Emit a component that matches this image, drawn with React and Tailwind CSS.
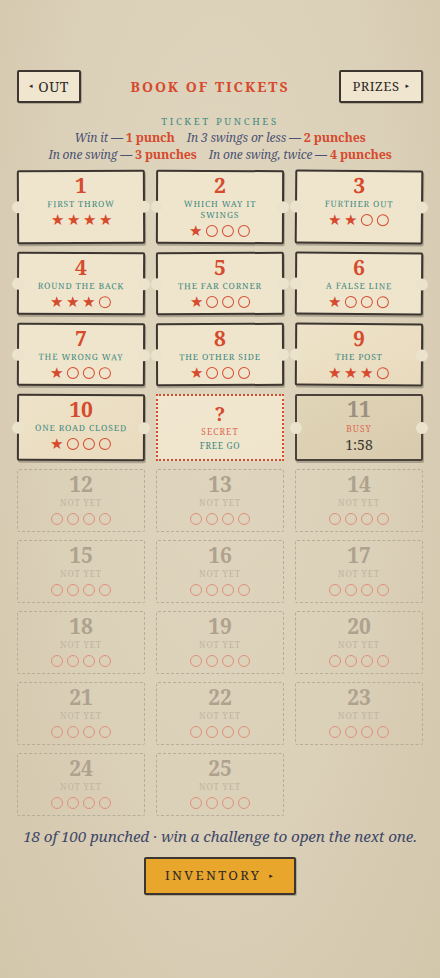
import React from 'react';

const SERIF = { fontFamily: '"Noto Serif", "DejaVu Serif", serif' };

const tickets = [
  { n: 1, title: 'First throw', p: 4, rot: '-rotate-[0.3deg]' },
  { n: 2, title: 'Which way it swings', p: 1, rot: 'rotate-[0.2deg]' },
  { n: 3, title: 'Further out', p: 2, rot: 'rotate-[0.5deg]' },
  { n: 4, title: 'Round the back', p: 3, rot: 'rotate-[0.3deg]' },
  { n: 5, title: 'The far corner', p: 1, rot: '-rotate-[0.2deg]' },
  { n: 6, title: 'A false line', p: 1, rot: 'rotate-[0.4deg]' },
  { n: 7, title: 'The wrong way', p: 1, rot: 'rotate-[0.3deg]' },
  { n: 8, title: 'The other side', p: 1, rot: '-rotate-[0.2deg]' },
  { n: 9, title: 'The post', p: 3, rot: 'rotate-[0.4deg]', warm: true },
  { n: 10, title: 'One road closed', p: 1, rot: 'rotate-[0.2deg]', warm: true },
];

function Punches({ count, faded }) {
  return (
    <div className="flex items-center justify-center gap-[3px] h-[15px]">
      {[0, 1, 2, 3].map((i) =>
        i < count ? (
          <span key={i} className="w-[13px] text-center text-[15px] leading-none text-[#d64a2e]">★</span>
        ) : (
          <span
            key={i}
            className={`w-[12px] h-[12px] rounded-full border-[1.5px] mx-[0.5px] ${faded ? 'border-[#e0907c]' : 'border-[#d64a2e]'}`}
          />
        )
      )}
    </div>
  );
}

function Notches() {
  return (
    <>
      <span className="absolute left-[-7px] top-1/2 -translate-y-1/2 w-[12px] h-[12px] rounded-full bg-[#ece3cc]" />
      <span className="absolute right-[-7px] top-1/2 -translate-y-1/2 w-[12px] h-[12px] rounded-full bg-[#ece3cc]" />
    </>
  );
}

function Ticket({ t }) {
  return (
    <div
      className={`relative flex flex-col items-center pt-[1px] pb-[4px] px-2 border-2 border-[#3d3630] rounded-[2px] shadow-[1px_2px_0_rgba(61,54,48,0.3)] ${t.rot} ${
        t.warm ? 'bg-gradient-to-br from-[#eee3c9] to-[#e8dabd]' : 'bg-[#efe5cd]'
      }`}
    >
      <Notches />
      <div className="text-[21px] leading-[25px] font-bold text-[#d64a2e]">{t.n}</div>
      <div className="text-[8.5px] leading-[11px] tracking-[0.1em] uppercase text-[#3f8a80] text-center mb-[3px]">
        {t.title}
      </div>
      <Punches count={t.p} />
    </div>
  );
}

function Secret() {
  return (
    <div className="relative flex flex-col items-center justify-center border-2 border-dotted border-[#d64a2e] bg-gradient-to-br from-[#f1e7d0] to-[#efe4cb]">
      <div className="text-[19px] leading-[22px] font-bold text-[#d64a2e]">?</div>
      <div className="text-[8.5px] leading-[13px] tracking-[0.12em] uppercase text-[#df6a52]">Secret</div>
      <div className="text-[8.5px] leading-[15px] tracking-[0.08em] uppercase text-[#3f8a80]">Free go</div>
    </div>
  );
}

function Busy() {
  return (
    <div className="relative flex flex-col items-center pt-[1px] pb-[4px] border-2 border-[#4a423a] rounded-[2px] shadow-[1px_2px_0_rgba(61,54,48,0.3)] bg-gradient-to-br from-[#e1d5b8] to-[#d8cbad]">
      <Notches />
      <div className="text-[21px] leading-[25px] font-bold text-[#9b9080]">11</div>
      <div className="text-[8.5px] leading-[13px] tracking-[0.12em] uppercase text-[#df6a52]">Busy</div>
      <div className="text-[14px] leading-[20px] text-[#3a342e]">1:58</div>
    </div>
  );
}

function Locked({ n }) {
  return (
    <div className="flex flex-col items-center pt-[2px] pb-[5px] border border-dashed border-[#b7ad99] rounded-[2px]">
      <div className="text-[21px] leading-[25px] font-bold text-[#aea28e]">{n}</div>
      <div className="text-[8.5px] leading-[11px] tracking-[0.1em] uppercase text-[#bfb5a2] mb-[3px]">Not yet</div>
      <Punches count={0} faded />
    </div>
  );
}

export default function App() {
  const locked = Array.from({ length: 14 }, (_, i) => i + 12);
  return (
    <div
      style={SERIF}
      className="min-h-[978px] w-full bg-[radial-gradient(ellipse_at_50%_35%,#e0d6bf_0%,#dbd0b8_55%,#d2c6ab_100%)] px-[17px] pt-[70px] pb-10"
    >
      {/* Header */}
      <div className="flex items-center justify-between">
        <button className="h-[33px] w-[64px] border-2 border-[#3d3630] rounded-[2px] bg-[#f0e6cf] text-[14px] tracking-[0.04em] text-[#2e2a26] flex items-center justify-center gap-[5px] shadow-[1px_1px_0_rgba(61,54,48,0.25)]">
          <span className="text-[7px]">◂</span>OUT
        </button>
        <h1 className="text-[14px] font-bold tracking-[0.14em] text-[#d64a2e]">BOOK OF TICKETS</h1>
        <button className="h-[33px] w-[84px] border-2 border-[#3d3630] rounded-[2px] bg-[#f0e6cf] text-[13px] tracking-[0.04em] text-[#2e2a26] flex items-center justify-center gap-[6px] shadow-[1px_1px_0_rgba(61,54,48,0.25)]">
          PRIZES<span className="text-[7px]">▸</span>
        </button>
      </div>

      {/* Punch rules */}
      <div className="mt-[12px] text-center tracking-[-0.01em]">
        <div className="text-[9.5px] tracking-[0.28em] text-[#3f8a80] leading-[14px]">TICKET PUNCHES</div>
        <div className="text-[12px] leading-[17px] text-[#4b5273]">
          <span className="italic">Win it —</span>{' '}
          <span className="font-bold text-[#d64a2e] text-[12.5px]">1 punch</span>
          <span className="inline-block w-[12px]" />
          <span className="italic">In 3 swings or less —</span>{' '}
          <span className="font-bold text-[#d64a2e] text-[12.5px]">2 punches</span>
        </div>
        <div className="text-[12px] leading-[17px] text-[#4b5273]">
          <span className="italic">In one swing —</span>{' '}
          <span className="font-bold text-[#d64a2e] text-[12.5px]">3 punches</span>
          <span className="inline-block w-[12px]" />
          <span className="italic">In one swing, twice —</span>{' '}
          <span className="font-bold text-[#d64a2e] text-[12.5px]">4 punches</span>
        </div>
      </div>

      {/* Tickets */}
      <div className="mt-[7px] grid grid-cols-3 gap-x-[11px] gap-y-[8px]">
        {tickets.map((t) => (
          <Ticket key={t.n} t={t} />
        ))}
        <Secret />
        <Busy />
        {locked.map((n) => (
          <Locked key={n} n={n} />
        ))}
      </div>

      <p className="mt-[9px] text-center italic text-[15.3px] leading-[22px] tracking-[-0.01em] text-[#3f4869] whitespace-nowrap">
        18 of 100 punched · win a challenge to open the next one.
      </p>

      <div className="mt-[10px] flex justify-center">
        <button className="h-[38px] w-[152px] border-2 border-[#3d3630] rounded-[2px] bg-[#e9a62d] text-[13px] tracking-[0.18em] text-[#2e2a26] flex items-center justify-center gap-[8px] shadow-[1px_1px_0_rgba(61,54,48,0.25)]">
          INVENTORY<span className="text-[7px]">▸</span>
        </button>
      </div>
    </div>
  );
}
